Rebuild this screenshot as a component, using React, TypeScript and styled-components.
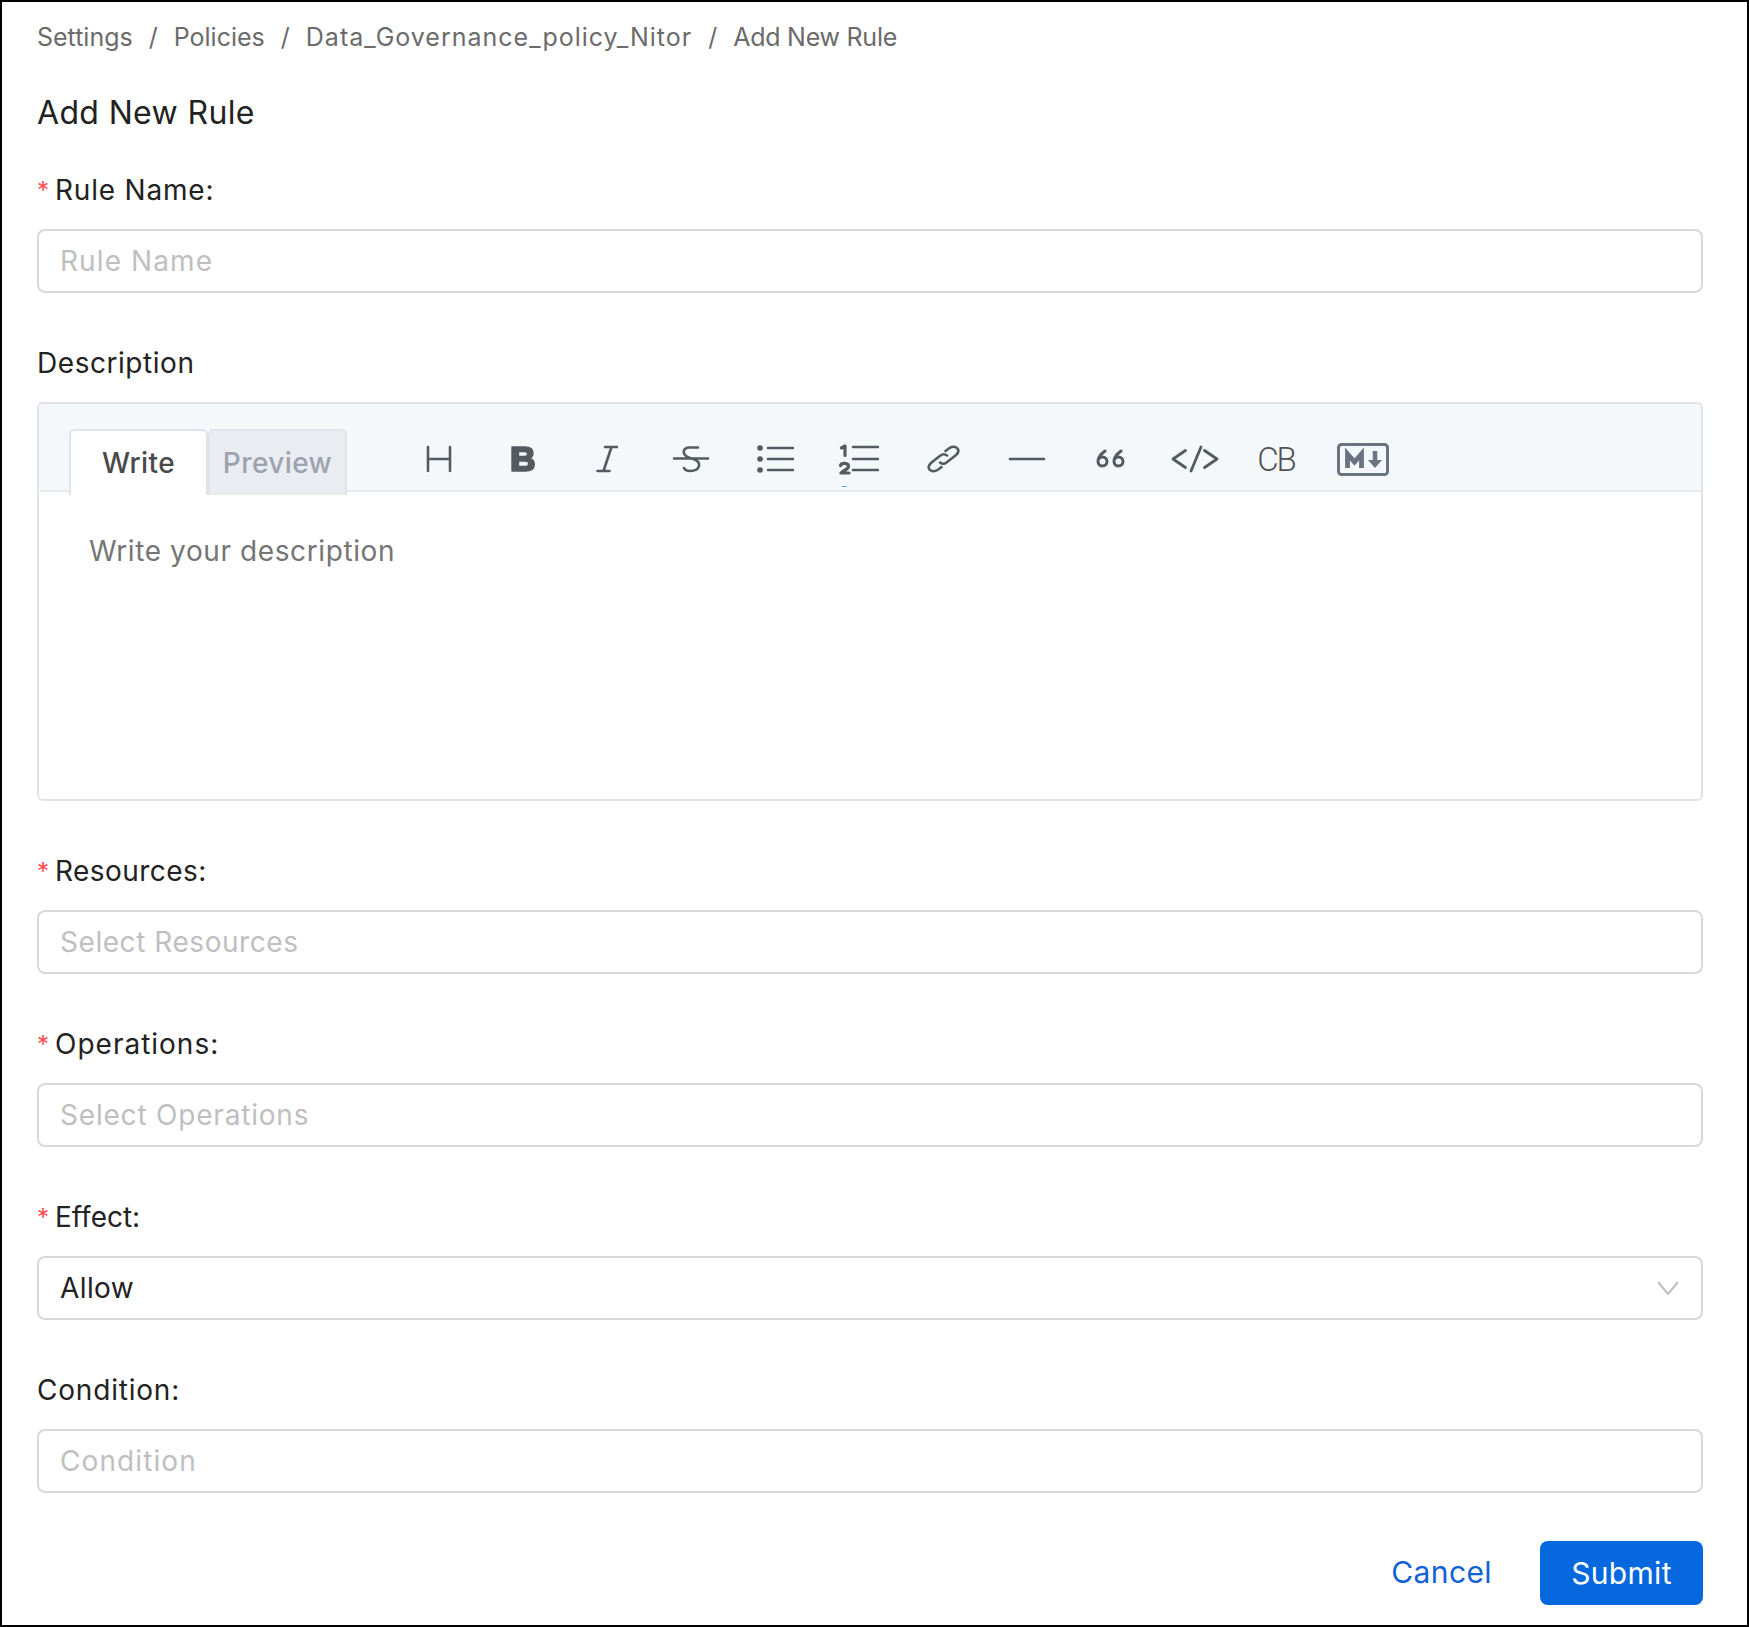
import React from "react";
import styled, { createGlobalStyle } from "styled-components";

const GlobalStyle = createGlobalStyle`
  html, body {
    margin: 0;
    padding: 0;
    background: #fff;
  }
  * {
    box-sizing: border-box;
  }
`;

const Page = styled.div`
  width: 1749px;
  height: 1627px;
  border: 2px solid #000;
  padding: 18px 44px 0 35px;
  background: #fff;
  font-family: Inter, "Liberation Sans", sans-serif;
  color: #222;
  display: flex;
  flex-direction: column;
`;

const Breadcrumb = styled.nav`
  display: flex;
  height: 34px;
  align-items: center;
  font-size: 25px;
  color: #6b6b6b;
`;

const Crumb = styled.span<{ $track?: number }>`
  letter-spacing: ${(p) => p.$track ?? 0}px;
`;

const Sep = styled.span`
  margin: 0 16px;
`;

const Title = styled.h1`
  margin: 34px 0 31px;
  font-size: 32px;
  line-height: 50px;
  font-weight: 400;
  letter-spacing: 0.35px;
  color: #222;
`;

const Field = styled.div`
  display: flex;
  flex-direction: column;
  margin-bottom: 49px;
`;

const Label = styled.label<{ $track?: number }>`
  display: flex;
  align-items: center;
  height: 40px;
  padding-top: 2px;
  margin-bottom: 20px;
  font-size: 28px;
  letter-spacing: ${(p) => p.$track ?? 0.55}px;
  color: #222;
`;

const Star = styled.span`
  color: #ff4d4f;
  width: 18px;
  font-size: 24px;
`;

const Box = styled.div<{ $filled?: boolean; $track?: number }>`
  height: 64px;
  border: 2px solid #d9d9d9;
  border-radius: 8px;
  padding: 0 22px 0 21px;
  display: flex;
  align-items: center;
  justify-content: space-between;
  font-size: 28px;
  letter-spacing: ${(p) => p.$track ?? 0.75}px;
  color: ${(p) => (p.$filled ? "#222" : "#bfbfbf")};
`;

const Editor = styled.div`
  height: 399px;
  border: 2px solid #dfe3e8;
  border-radius: 6px;
  overflow: hidden;
`;

const Toolbar = styled.div`
  height: 88px;
  background: #f5f8fb;
  border-bottom: 2px solid #e8ecf1;
  padding: 25px 0 0 30px;
  display: flex;
`;

const Tab = styled.div<{ $active?: boolean }>`
  width: 139px;
  height: 66px;
  border: 2px solid #e0e4ea;
  border-bottom: none;
  border-radius: 6px 6px 0 0;
  display: flex;
  align-items: center;
  justify-content: center;
  font-size: 28px;
  font-weight: 500;
  letter-spacing: 0.4px;
  position: relative;
  background: ${(p) => (p.$active ? "#fff" : "#e9ecf0")};
  color: ${(p) => (p.$active ? "#4a4a4a" : "#9ca3af")};
`;

const Tools = styled.div`
  display: flex;
  margin-left: 50px;
  margin-top: -1px;
`;

const Tool = styled.div<{ $tick?: boolean }>`
  position: relative;
  width: 84px;
  height: 62px;
  display: flex;
  align-items: center;
  justify-content: center;
  color: #555a60;

  &::after {
    content: "";
    display: ${(p) => (p.$tick ? "block" : "none")};
    position: absolute;
    left: 25px;
    top: 58px;
    width: 5px;
    height: 1px;
    background: #6aa5ee;
  }
`;

const ToolText = styled.span`
  font-family: Roboto, Inter, sans-serif;
  font-size: 33px;
  font-weight: 300;
  letter-spacing: -2px;
  margin-right: 6px;
  color: #4f5358;
`;

const Body = styled.div`
  padding: 42px 0 0 50px;
  font-size: 28px;
  letter-spacing: 0.6px;
  color: #757575;
`;

const Footer = styled.div`
  display: flex;
  justify-content: flex-end;
  align-items: center;
  margin-top: -1px;
`;

const CancelLink = styled.a`
  font-size: 30px;
  letter-spacing: 0.4px;
  color: #0f62d6;
  margin-right: 48px;
  padding-bottom: 2px;
`;

const SubmitButton = styled.button`
  width: 163px;
  height: 64px;
  border: none;
  border-radius: 8px;
  background: #0568de;
  color: #fff;
  font: inherit;
  font-size: 30px;
  letter-spacing: 0.3px;
`;

const Icon = ({ w, h, children }: { w: number; h: number; children: React.ReactNode }) => (
  <svg
    width={w}
    height={h}
    viewBox={`0 0 ${w} ${h}`}
    fill="none"
    stroke="currentColor"
    strokeWidth="2.6"
    strokeLinecap="round"
    strokeLinejoin="round"
  >
    {children}
  </svg>
);

const tools = [
  <Icon w={26} h={28}>
    <path d="M2 2v24M24 2v24M2 14h22" />
  </Icon>,
  <Icon w={26} h={28}>
    <path
      fill="currentColor"
      strokeWidth="1.4"
      fillRule="evenodd"
      d="M2 2h13c5 0 8 2.500 8 6.200 0 2.300-1.200 4-3.500 5 3 .8 4.800 3 4.800 6 0 4.500-3.300 6.800-9 6.800H2zM8.500 6.500v5h6c2 0 3.200-.9 3.200-2.500s-1.200-2.500-3.200-2.500zM8.500 16v5.500h7c2 0 3.200-1 3.200-2.700S17.500 16 15.500 16z"
    />
  </Icon>,
  <Icon w={22} h={28}>
    <path d="M9 2h12M1.500 26h12M15.500 2L7.500 26" />
  </Icon>,
  <Icon w={38} h={30}>
    <path d="M2 14.500h34M26 3.500H17c-4 0-6 3-5 6 1 2.500 4 4 8 5 5 1.500 8 3.500 7 7.500-1 4-5 5-9 5-3 0-5-1-6-3" />
  </Icon>,
  <Icon w={38} h={28}>
    <path d="M12 3h25M12 14h25M12 25h25" />
    <path strokeWidth="5.600" d="M4 3h.1M4 14h.1M4 25h.1" />
  </Icon>,
  <Icon w={40} h={32}>
    <path d="M14 4h25M14 16h25M14 27h25" />
    <path strokeWidth="3.200" d="M2.500 5L6 3v9.500M1.500 22.500c1-3 8-3 8 1 0 3-6 4-7.500 6.500h8" />
  </Icon>,
  <Icon w={35} h={28}>
    <path d="M14 17.500c2 1.500 4.500 1.500 6.500 0l9-7c3-2.500 3.500-5 2-7s-5-2.500-8-.5l-4 3" />
    <path d="M21 10.500c-2-1.500-4.500-1.500-6.500 0l-9 7c-3 2.500-3.500 5-2 7s5 2.500 8 .5l4-3" />
  </Icon>,
  <Icon w={38} h={4}>
    <path d="M2 2h34" />
  </Icon>,
  <Icon w={32} h={20}>
    <path
      strokeWidth="3"
      d="M10 2C6 5 3 8 3 12c0 3 2 5 4.500 5s4.500-2 4.500-4.500S10 8 7.500 8 3 10 3 12M26 2c-4 3-7 6-7 10 0 3 2 5 4.500 5s4.500-2 4.500-4.500S26 8 23.500 8 19 10 19 12"
    />
  </Icon>,
  <Icon w={48} h={28}>
    <path strokeWidth="2.800" d="M14.500 5.500L2 14l12.500 8.500M33.500 5.500L46 14l-12.500 8.500M30 2l-10 24" />
  </Icon>,
  <ToolText>CB</ToolText>,
  <svg width="52" height="33" viewBox="0 0 52 33" fill="none" stroke="#6b7280" strokeWidth="3">
    <rect x="1.500" y="1.500" width="49" height="30" rx="3" />
    <path strokeWidth="4.800" strokeLinejoin="miter" d="M10.500 25V11l7 8 7-8v14" />
    <path strokeWidth="4.500" d="M38 8v11" />
    <path fill="#6b7280" stroke="none" d="M31 17h14l-7 8z" />
  </svg>,
];

const ChevronDown = () => (
  <svg width="22" height="14" viewBox="0 0 22 14" fill="none" stroke="#bfbfbf" strokeWidth="2">
    <path d="M1 1l10 12L21 1" />
  </svg>
);

const App = () => (
  <Page>
    <GlobalStyle />
    <Breadcrumb>
      <Crumb>Settings</Crumb>
      <Sep>/</Sep>
      <Crumb>Policies</Crumb>
      <Sep>/</Sep>
      <Crumb $track={1}>Data_Governance_policy_Nitor</Crumb>
      <Sep>/</Sep>
      <Crumb $track={-0.25}>Add New Rule</Crumb>
    </Breadcrumb>
    <Title>Add New Rule</Title>
    <Field>
      <Label $track={0.8}>
        <Star>*</Star>Rule Name:
      </Label>
      <Box $track={1.1}>Rule Name</Box>
    </Field>
    <Field>
      <Label>Description</Label>
      <Editor>
        <Toolbar>
          <Tab $active>Write</Tab>
          <Tab>Preview</Tab>
          <Tools>
            {tools.map((t, i) => (
              <Tool key={i} $tick={i === 5}>
                {t}
              </Tool>
            ))}
          </Tools>
        </Toolbar>
        <Body>Write your description</Body>
      </Editor>
    </Field>
    <Field>
      <Label $track={0.45}>
        <Star>*</Star>Resources:
      </Label>
      <Box $track={0.55}>Select Resources</Box>
    </Field>
    <Field>
      <Label $track={1}>
        <Star>*</Star>Operations:
      </Label>
      <Box $track={0.8}>Select Operations</Box>
    </Field>
    <Field>
      <Label $track={0}>
        <Star>*</Star>Effect:
      </Label>
      <Box $filled $track={0.4}>
        Allow
        <ChevronDown />
      </Box>
    </Field>
    <Field>
      <Label $track={0.8}>Condition:</Label>
      <Box $track={1.1}>Condition</Box>
    </Field>
    <Footer>
      <CancelLink>Cancel</CancelLink>
      <SubmitButton>Submit</SubmitButton>
    </Footer>
  </Page>
);

export default App;
